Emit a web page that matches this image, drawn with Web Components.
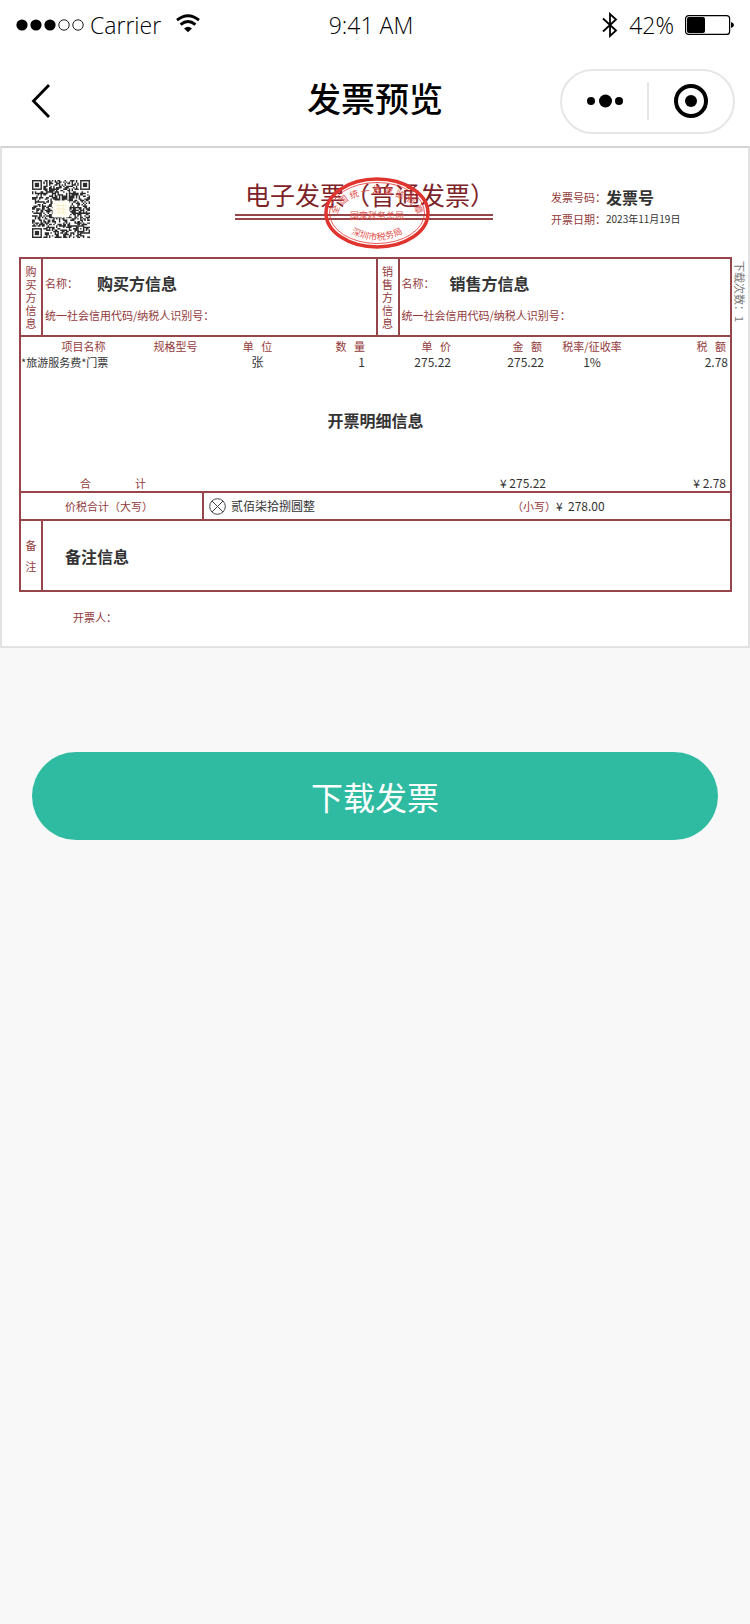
<!DOCTYPE html>
<html lang="zh-CN">
<head>
<meta charset="utf-8">
<meta name="viewport" content="width=device-width, initial-scale=1">
<title>发票预览</title>
<style>
  :root {
    --ink: #333;
    --label: #93393b;
    --rule: #96464a;
    --green: #2fbba2;
  }

  body {
    margin: 0;
    min-height: 100vh;
    background: #f8f8f8;
    font-family: "Noto Sans CJK SC", sans-serif;
    color: #000;
  }
</style>
</head>
<body>
  <invoice-page></invoice-page>

<script>
class StatusBar extends HTMLElement {
  constructor() {
    super()
    this.attachShadow({ mode: "open" })
  }

  static get styles() {
    return `
      :host {
        display: grid;
        grid-template-columns: 1fr auto 1fr;
        align-items: center;
        height: 50px;
        padding: 0 16px;
        background: #fff;
        font: 300 23px/32px "Open Sans", "Noto Sans", sans-serif;
      }

      .left,
      .right {
        display: flex;
        align-items: center;
      }

      .right {
        justify-content: flex-end;
      }

      .time {
        padding-right: 8px;
      }

      .carrier {
        margin: 0 15px 0 6px;
      }

      .level {
        margin: 0 11px;
      }

      svg {
        display: block;
        flex: none;
      }
    `
  }

  connectedCallback() {
    this.shadowRoot.innerHTML = `
      <style>${StatusBar.styles}</style>
      <div class="left">
        <svg width="68" height="12" viewBox="0 0 68 12">
          <circle cx="6" cy="6" r="5.6"/>
          <circle cx="20" cy="6" r="5.6"/>
          <circle cx="34" cy="6" r="5.6"/>
          <circle cx="48" cy="6" r="5.2" fill="none" stroke="#000" stroke-width=".9"/>
          <circle cx="62" cy="6" r="5.2" fill="none" stroke="#000" stroke-width=".9"/>
        </svg>
        <span class="carrier">Carrier</span>
        <svg width="24" height="24" viewBox="0 0 24 24" fill="none" stroke="#000" stroke-width="2.8">
          <path d="M1 7.200Q12-1.600 23 7.200"/>
          <path d="M4.600 11.600Q12 5.400 19.400 11.600"/>
          <path d="M8 15.400Q12 12.200 16 15.400L12 19.200Z" fill="#000" stroke="none"/>
        </svg>
      </div>
      <span class="time">9:41 AM</span>
      <div class="right">
        <svg width="16" height="26" viewBox="0 0 16 26" fill="none" stroke="#000" stroke-width="1.8">
          <path d="M1 6.500 14 18.500 8 24V2L14 7.500 1 19.500"/>
        </svg>
        <span class="level">42%</span>
        <svg width="49" height="20" viewBox="0 0 49 20">
          <rect x=".6" y=".6" width="44" height="18.800" rx="3" fill="none" stroke="#000" stroke-width="1.200"/>
          <rect x="2" y="2" width="18" height="16" rx="2"/>
          <path d="M46 7q3 1 3 3t-3 3z"/>
        </svg>
      </div>
    `
  }
}

class NavBar extends HTMLElement {
  constructor() {
    super()
    this.attachShadow({ mode: "open" })
  }

  static get styles() {
    return `
      :host {
        display: grid;
        grid-template-columns: 1fr auto 1fr;
        align-items: center;
        height: 96px;
        padding: 0 15px;
        background: #fff;
      }

      h1 {
        margin: 0;
        font-size: 34px;
        line-height: 48px;
        font-weight: 500;
      }

      button {
        display: grid;
        place-items: center;
        padding: 0;
        border: 0;
        background: none;
        cursor: pointer;
      }

      .back {
        width: 52px;
        height: 64px;
        margin-top: 6px;
      }

      .capsule {
        justify-self: end;
        display: flex;
        align-items: center;
        box-sizing: border-box;
        width: 175px;
        height: 65px;
        margin-top: 6px;
        border: 2px solid #e6e6e6;
        border-radius: 33px;
      }

      .capsule button {
        flex: 1;
        height: 100%;
      }

      .capsule span {
        width: 2px;
        height: 38px;
        background: #e6e6e6;
      }

      svg {
        display: block;
      }
    `
  }

  connectedCallback() {
    this.shadowRoot.innerHTML = `
      <style>${NavBar.styles}</style>
      <button class="back" type="button" aria-label="返回">
        <svg width="20" height="36" viewBox="0 0 20 36" fill="none" stroke="#000" stroke-width="2.800">
          <path d="M18 2 2.500 18 18 34"/>
        </svg>
      </button>
      <h1><slot></slot></h1>
      <div class="capsule">
        <button type="button" aria-label="更多">
          <svg width="38" height="14" viewBox="0 0 38 14">
            <circle cx="6" cy="7" r="4"/>
            <circle cx="20.500" cy="7" r="6.500"/>
            <circle cx="34" cy="7" r="4"/>
          </svg>
        </button>
        <span></span>
        <button type="button" aria-label="关闭">
          <svg width="36" height="36" viewBox="0 0 36 36">
            <circle cx="18" cy="18" r="15" fill="none" stroke="#000" stroke-width="4"/>
            <circle cx="18" cy="18" r="6"/>
          </svg>
        </button>
      </div>
    `
  }
}

class QrCode extends HTMLElement {
  constructor() {
    super()
    this.attachShadow({ mode: "open" })
  }

  // filler modules, always the same for the same seed
  modules(size) {
    let seed = 20231119
    let path = ""
    const inFinder = (x, y) =>
      (x < 8 && y < 8) || (x > size - 9 && y < 8) || (x < 8 && y > size - 9)
    for (let y = 0; y < size; y++) {
      for (let x = 0; x < size; x++) {
        seed = (seed * 1103515245 + 12345) % 2147483648
        if (seed / 2147483648 < .52 && !inFinder(x, y)) path += `M${x} ${y}h1v1h-1z`
      }
    }
    return path
  }

  finder(x, y, size = 7) {
    return `
      <rect x="${x}" y="${y}" width="${size}" height="${size}"/>
      <rect x="${x + 1}" y="${y + 1}" width="${size - 2}" height="${size - 2}" fill="#fff"/>
      <rect x="${x + 2}" y="${y + 2}" width="${size - 4}" height="${size - 4}"/>
    `
  }

  connectedCallback() {
    this.shadowRoot.innerHTML = `
      <style>
        :host { display: block; }
        svg { display: block; }
      </style>
      <svg width="58" height="58" viewBox="0 0 41 41" fill="#2b2b2b" role="img" aria-label="二维码">
        <path d="${this.modules(41)}"/>
        ${this.finder(0, 0)}
        ${this.finder(34, 0)}
        ${this.finder(0, 34)}
        ${this.finder(32, 32, 5)}
        <rect x="14.500" y="14.500" width="12" height="12" rx="1" fill="#fffdf4"/>
        <path d="M17 18h7M17 20.500h7M18 23h6M19 17v7M22 17v7" stroke="#f8efca" stroke-width=".8"/>
      </svg>
    `
  }
}

class TaxSeal extends HTMLElement {
  constructor() {
    super()
    this.attachShadow({ mode: "open" })
  }

  connectedCallback() {
    this.shadowRoot.innerHTML = `
      <style>
        :host { display: block; }
        svg { display: block; }
        text { font-family: "Noto Sans CJK SC", sans-serif; font-size: 9px; fill: #e2554e; }
      </style>
      <svg width="108" height="72" viewBox="0 0 108 72">
        <defs>
          <path id="top" d="M14 40A40 23.500 0 0 1 94 40"/>
          <path id="bottom" d="M24 54Q54 72 84 54"/>
        </defs>
        <ellipse cx="54" cy="36" rx="51" ry="34" fill="none" stroke="#e0352e" stroke-width="3.500"/>
        <ellipse cx="54" cy="36" rx="47.500" ry="30.500" fill="none" stroke="#e0352e" stroke-width=".8"/>
        <text text-anchor="middle"><textPath href="#top" startOffset="50%">全 国 统 一 发 票 监 制 章</textPath></text>
        <text x="54" y="42" text-anchor="middle">国家税务总局</text>
        <text text-anchor="middle"><textPath href="#bottom" startOffset="50%">深圳市税务局</textPath></text>
      </svg>
    `
  }
}

class InvoiceHeader extends HTMLElement {
  constructor() {
    super()
    this.attachShadow({ mode: "open" })
  }

  static get styles() {
    return `
      :host {
        display: grid;
        grid-template-columns: 1fr 258px 1fr;
        align-items: start;
        box-sizing: border-box;
        height: 109px;
        padding: 32px 52px 0 30px;
      }

      .heading {
        position: relative;
        color: #7d2328;
      }

      h2 {
        margin: 0;
        padding: 0 0 6px 10px;
        border-bottom: 6px double var(--rule);
        font-size: 25px;
        line-height: 28px;
        font-weight: 400;
        white-space: nowrap;
      }

      /* the seal is stamped over the heading */
      tax-seal {
        position: absolute;
        top: -3px;
        left: 88px;
      }

      dl {
        display: grid;
        grid-template-columns: auto 1fr;
        align-items: center;
        margin: 6px 0 0 58px;
        line-height: 22px;
        white-space: nowrap;
      }

      dt {
        font-size: 11px;
        color: var(--label);
      }

      dd {
        margin: 0;
        font-size: 10px;
        color: var(--ink);
      }

      .number {
        font-size: 16px;
        font-weight: 700;
      }
    `
  }

  connectedCallback() {
    this.shadowRoot.innerHTML = `
      <style>${InvoiceHeader.styles}</style>
      <qr-code></qr-code>
      <div class="heading">
        <h2>电子发票（普通发票）</h2>
        <tax-seal></tax-seal>
      </div>
      <dl>
        <dt>发票号码：</dt>
        <dd class="number">发票号</dd>
        <dt>开票日期：</dt>
        <dd>2023年11月19日</dd>
      </dl>
    `
  }
}

class SideLabel extends HTMLElement {
  constructor() {
    super()
    this.attachShadow({ mode: "open" })
  }

  connectedCallback() {
    this.shadowRoot.innerHTML = `
      <style>
        :host {
          display: flex;
          align-items: center;
          justify-content: center;
          flex: none;
          width: 20px;
          border-right: 2px solid var(--rule);
          color: var(--label);
          font-size: 11px;
          line-height: 13px;
        }

        span {
          width: 11px;
          word-break: break-all;
        }

        :host([loose]) span {
          line-height: 21px;
        }
      </style>
      <span><slot></slot></span>
    `
  }
}

class PartyInfo extends HTMLElement {
  constructor() {
    super()
    this.attachShadow({ mode: "open" })
  }

  connectedCallback() {
    this.shadowRoot.innerHTML = `
      <style>
        :host {
          display: flex;
        }

        div {
          display: flex;
          flex-direction: column;
          padding: 12px 0 0 2px;
          color: var(--label);
          font-size: 11px;
          white-space: nowrap;
        }

        p {
          display: flex;
          align-items: center;
          gap: var(--name-gap, 20px);
          height: 24px;
          margin: 0 0 10px;
        }

        p + p {
          height: 20px;
          margin: 0;
        }

        strong {
          color: var(--ink);
          font-size: 16px;
        }
      </style>
      <side-label><slot name="role"></slot></side-label>
      <div>
        <p>名称：<strong><slot></slot></strong></p>
        <p>统一社会信用代码/纳税人识别号：</p>
      </div>
    `
  }
}

class InvoiceItems extends HTMLElement {
  constructor() {
    super()
    this.attachShadow({ mode: "open" })
  }

  static get styles() {
    return `
      :host {
        display: block;
      }

      table {
        width: 100%;
        table-layout: fixed;
        border-collapse: collapse;
        color: var(--ink);
        font-size: 12px;
        line-height: 16px;
        white-space: nowrap;
      }

      th,
      td {
        padding: 0;
        text-align: center;
      }

      th {
        height: 17px;
        color: var(--label);
        font-size: 11px;
        font-weight: 400;
      }

      td.item {
        text-align: left;
        font-size: 11px;
      }

      .end {
        padding-right: 2px;
        text-align: right;
      }

      .inset {
        padding-right: 4px;
      }

      .flush {
        padding-right: 0;
      }

      .detail {
        height: 100px;
        font-size: 16px;
        line-height: 24px;
        font-weight: 700;
      }

      tfoot th,
      tfoot td {
        height: 21px;
        vertical-align: bottom;
      }

      .sum {
        display: flex;
        justify-content: center;
        gap: 44px;
      }
    `
  }

  connectedCallback() {
    this.shadowRoot.innerHTML = `
      <style>${InvoiceItems.styles}</style>
      <table>
        <colgroup>
          <col style="width: 125px">
          <col style="width: 59px">
          <col style="width: 105px">
          <col style="width: 57px">
          <col style="width: 86px">
          <col style="width: 93px">
          <col style="width: 92px">
          <col style="width: 92px">
        </colgroup>
        <thead>
          <tr>
            <th>项目名称</th>
            <th>规格型号</th>
            <th>单&nbsp;&nbsp;&nbsp;位</th>
            <th class="end">数&nbsp;&nbsp;&nbsp;量</th>
            <th class="end">单&nbsp;&nbsp;&nbsp;价</th>
            <th class="end inset">金&nbsp;&nbsp;&nbsp;额</th>
            <th>税率/征收率</th>
            <th class="end inset">税&nbsp;&nbsp;&nbsp;额</th>
          </tr>
        </thead>
        <tbody>
          <tr>
            <td class="item">*旅游服务费*门票</td>
            <td></td>
            <td>张</td>
            <td class="end">1</td>
            <td class="end">275.22</td>
            <td class="end">275.22</td>
            <td>1%</td>
            <td class="end">2.78</td>
          </tr>
          <tr>
            <td class="detail" colspan="8">开票明细信息</td>
          </tr>
        </tbody>
        <tfoot>
          <tr>
            <th colspan="2"><span class="sum"><span>合</span><span>计</span></span></th>
            <td colspan="3"></td>
            <td class="end flush">¥ 275.22</td>
            <td></td>
            <td class="end inset">¥ 2.78</td>
          </tr>
        </tfoot>
      </table>
    `
  }
}

class InvoiceCard extends HTMLElement {
  constructor() {
    super()
    this.attachShadow({ mode: "open" })
  }

  static get styles() {
    return `
      :host {
        display: block;
        border: 2px solid #e2e2e2;
        border-top-color: #d4d4d4;
        background: #fff;
        color: var(--ink);
      }

      .body {
        display: flex;
        padding-left: 17px;
      }

      .frame {
        flex: 1;
        min-width: 0;
        border: 2px solid var(--rule);
      }

      .copies {
        width: 16px;
        padding-top: 4px;
        color: #777;
        font-size: 11px;
        line-height: 16px;
        writing-mode: vertical-rl;
        text-orientation: sideways;
      }

      .parties {
        display: grid;
        grid-template-columns: 1fr 1fr;
        height: 76px;
      }

      .parties,
      invoice-items,
      .total {
        border-bottom: 2px solid var(--rule);
      }

      .buyer {
        --name-gap: 19px;
      }

      .seller {
        --name-gap: 15px;
        border-left: 2px solid var(--rule);
      }

      .label {
        color: var(--label);
        font-size: 11px;
      }

      .total {
        display: flex;
        height: 26px;
        font-size: 12px;
        line-height: 26px;
        white-space: nowrap;
      }

      .words {
        box-sizing: border-box;
        width: 183px;
        padding-left: 44px;
        border-right: 2px solid var(--rule);
      }

      .capital {
        display: flex;
        align-items: center;
        flex: 1;
        gap: 5px;
        padding-left: 5px;
      }

      .figure {
        display: flex;
        width: 218px;
      }

      .note {
        display: flex;
        height: 69px;
      }

      .note p {
        margin: 0;
        padding-left: 22px;
        font-size: 16px;
        font-weight: 700;
        line-height: 70px;
      }

      .drawer {
        margin: 0;
        padding: 14px 0 18px 71px;
        line-height: 22px;
      }
    `
  }

  connectedCallback() {
    this.shadowRoot.innerHTML = `
      <style>${InvoiceCard.styles}</style>
      <invoice-header></invoice-header>
      <div class="body">
        <div class="frame">
          <div class="parties">
            <party-info class="buyer"><span slot="role">购买方信息</span>购买方信息</party-info>
            <party-info class="seller"><span slot="role">销售方信息</span>销售方信息</party-info>
          </div>
          <invoice-items></invoice-items>
          <div class="total">
            <span class="label words">价税合计（大写）</span>
            <span class="capital">
              <svg width="17" height="17" viewBox="0 0 17 17" fill="none" stroke="#444">
                <circle cx="8.500" cy="8.500" r="7.800"/>
                <path d="M3 3 14 14M14 3 3 14"/>
              </svg>
              贰佰柒拾捌圆整
            </span>
            <span class="figure"><span class="label">（小写）</span>¥&nbsp; 278.00</span>
          </div>
          <div class="note">
            <side-label loose>备注</side-label>
            <p>备注信息</p>
          </div>
        </div>
        <div class="copies">下载次数：1</div>
      </div>
      <p class="drawer label">开票人：</p>
    `
  }
}

class PrimaryButton extends HTMLElement {
  constructor() {
    super()
    this.attachShadow({ mode: "open" })
  }

  connectedCallback() {
    this.shadowRoot.innerHTML = `
      <style>
        :host {
          display: block;
        }

        button {
          display: block;
          width: 100%;
          height: 88px;
          padding: 0;
          border: 0;
          border-radius: 44px;
          background: var(--green);
          color: #fff;
          font: inherit;
          font-size: 32px;
          cursor: pointer;
        }
      </style>
      <button type="button"><slot></slot></button>
    `
  }
}

class InvoicePage extends HTMLElement {
  constructor() {
    super()
    this.attachShadow({ mode: "open" })
  }

  connectedCallback() {
    this.shadowRoot.innerHTML = `
      <style>
        :host {
          display: block;
        }

        primary-button {
          margin: 104px 32px 0;
        }
      </style>
      <status-bar></status-bar>
      <nav-bar>发票预览</nav-bar>
      <main>
        <invoice-card></invoice-card>
        <primary-button>下载发票</primary-button>
      </main>
    `
  }
}

customElements.define("status-bar", StatusBar)
customElements.define("nav-bar", NavBar)
customElements.define("qr-code", QrCode)
customElements.define("tax-seal", TaxSeal)
customElements.define("invoice-header", InvoiceHeader)
customElements.define("side-label", SideLabel)
customElements.define("party-info", PartyInfo)
customElements.define("invoice-items", InvoiceItems)
customElements.define("invoice-card", InvoiceCard)
customElements.define("primary-button", PrimaryButton)
customElements.define("invoice-page", InvoicePage)
</script>
</body>
</html>
